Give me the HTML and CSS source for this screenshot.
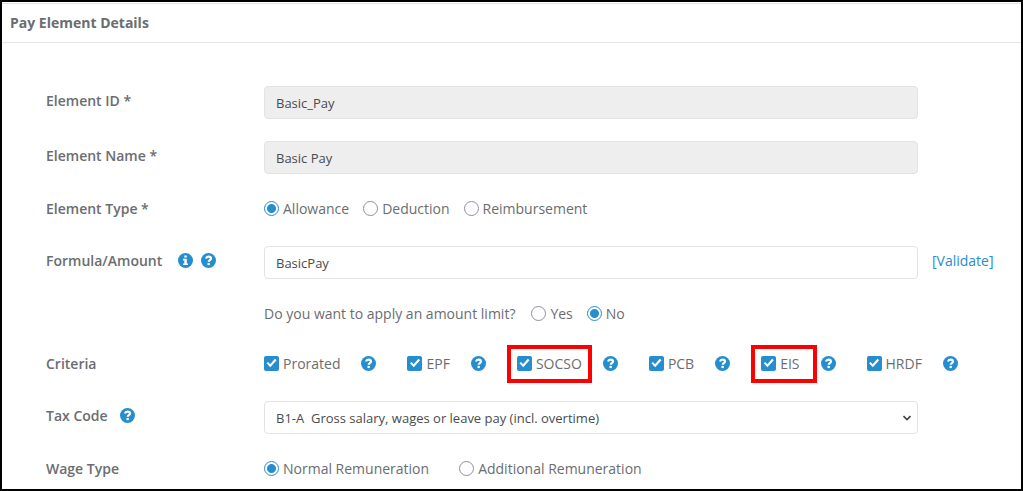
FILE: index.html
```html
<!DOCTYPE html>
<html lang="en">
<head>
<meta charset="utf-8">
<meta name="viewport" content="width=device-width, initial-scale=1">
<title>Pay Element Details</title>
<link rel="stylesheet" href="styles.css">
</head>
<body>
<svg class="sprite" aria-hidden="true">
  <symbol id="help" viewBox="0 0 15 15">
    <circle cx="7.5" cy="7.5" r="7.5" fill="#268dce"/>
    <path d="M5 5.5C5.4 4.2 6.3 3.6 7.5 3.6c1.4 0 2.5.7 2.5 1.9 0 1.6-2.3 1.6-2.3 3.3" fill="none" stroke="#fff" stroke-width="2.2"/>
    <path d="M6.5 9.9h2.3v2.2H6.5z" fill="#fff"/>
  </symbol>
  <symbol id="info" viewBox="0 0 15 15">
    <circle cx="7.5" cy="7.5" r="7.5" fill="#268dce"/>
    <path d="M6.3 2.5h2.5v2.1H6.3zM5.1 5.8h3.7v4.6h1.2V12H5.1v-1.6h1.2V7.4H5.1z" fill="#fff"/>
  </symbol>
</svg>
<main class="panel">
  <h1 class="panel-title">Pay Element Details</h1>
  <form class="form">
    <div class="row row-control">
      <label class="label" for="element-id">Element ID *</label>
      <input class="control" id="element-id" type="text" value="Basic_Pay" readonly>
    </div>
    <div class="row row-control">
      <label class="label" for="element-name">Element Name *</label>
      <input class="control" id="element-name" type="text" value="Basic Pay" readonly>
    </div>
    <div class="row row-type" role="radiogroup" aria-labelledby="type-label">
      <span class="label" id="type-label">Element Type *</span>
      <div class="options">
        <label class="option"><input class="radio" type="radio" name="type" checked>Allowance</label>
        <label class="option"><input class="radio" type="radio" name="type">Deduction</label>
        <label class="option"><input class="radio" type="radio" name="type">Reimbursement</label>
      </div>
    </div>
    <div class="row row-control">
      <div class="label label-formula">
        <label for="formula">Formula/Amount</label>
        <span class="icons"><svg class="icon"><use href="#info"/></svg><svg class="icon"><use href="#help"/></svg></span>
      </div>
      <input class="control" id="formula" type="text" value="BasicPay">
      <a class="validate" href="#">[Validate]</a>
    </div>
    <div class="row" role="radiogroup" aria-labelledby="limit-label">
      <div class="options field">
        <span class="question" id="limit-label">Do you want to apply an amount limit?</span>
        <label class="option"><input class="radio" type="radio" name="limit">Yes</label>
        <label class="option"><input class="radio" type="radio" name="limit" checked>No</label>
      </div>
    </div>
    <div class="row row-criteria" role="group" aria-labelledby="criteria-label">
      <span class="label" id="criteria-label">Criteria</span>
      <div class="criteria">
        <div class="criterion"><label class="option"><input class="check" type="checkbox" checked>Prorated</label><svg class="icon"><use href="#help"/></svg></div>
        <div class="criterion"><label class="option"><input class="check" type="checkbox" checked>EPF</label><svg class="icon"><use href="#help"/></svg></div>
        <div class="criterion"><label class="option marked"><input class="check" type="checkbox" checked>SOCSO</label><svg class="icon"><use href="#help"/></svg></div>
        <div class="criterion"><label class="option"><input class="check" type="checkbox" checked>PCB</label><svg class="icon"><use href="#help"/></svg></div>
        <div class="criterion"><label class="option marked marked-wide"><input class="check" type="checkbox" checked>EIS</label><svg class="icon"><use href="#help"/></svg></div>
        <div class="criterion"><label class="option"><input class="check" type="checkbox" checked>HRDF</label><svg class="icon"><use href="#help"/></svg></div>
      </div>
    </div>
    <div class="row row-control">
      <div class="label label-tax">
        <label for="tax-code">Tax Code</label>
        <svg class="icon"><use href="#help"/></svg>
      </div>
      <div class="select-box">
        <select class="control select" id="tax-code"><option>B1-A&nbsp; Gross salary, wages or leave pay (incl. overtime)</option></select>
        <svg class="chevron" viewBox="0 0 8 6"><path d="M0.5 1l3.5 3.5L7.5 1" fill="none" stroke="#444" stroke-width="1.6"/></svg>
      </div>
    </div>
    <div class="row" role="radiogroup" aria-labelledby="wage-label">
      <span class="label" id="wage-label">Wage Type</span>
      <div class="options options-wide">
        <label class="option"><input class="radio" type="radio" name="wage" checked>Normal Remuneration</label>
        <label class="option"><input class="radio" type="radio" name="wage">Additional Remuneration</label>
      </div>
    </div>
  </form>
</main>
</body>
</html>
```
FILE: styles.css
```css
* {
  box-sizing: border-box;
}

body {
  margin: 0;
  background: #fff;
  color: #6b6d70;
  font: 14px/20px "Open Sans", "Noto Sans", sans-serif;
}

.sprite {
  position: absolute;
  width: 0;
  height: 0;
}

.panel {
  min-height: 100vh;
  padding-top: 1px;
  border: 2px solid #000;
}

.panel-title {
  margin: 0;
  padding: 9px 8px;
  border: solid #e3e4e5;
  border-width: 1px 0;
  font-size: 14px;
  line-height: 20px;
  font-weight: 700;
}

.form {
  display: flex;
  flex-direction: column;
  gap: 22px;
  padding: 43px 0 4px 44px;
}

.row {
  display: grid;
  grid-template-columns: 218px minmax(0, 1fr) 103px;
  align-items: center;
  min-height: 26px;
}

.row-type {
  margin-bottom: 2px;
}

.row-criteria {
  min-height: 30px;
}

.label {
  display: flex;
  align-items: center;
  font-weight: 600;
}

.row-control > .label,
.row-control > .validate {
  padding-bottom: 4px;
}

.label-formula {
  gap: 16px;
}

.label-tax {
  gap: 12px;
}

.icons {
  display: flex;
  gap: 8px;
}

.icon {
  display: block;
  flex: none;
  width: 15px;
  height: 15px;
}

.control {
  width: 100%;
  height: 33px;
  margin: 0;
  padding: 0 11px;
  border: 1px solid #e2e3e4;
  border-radius: 4px;
  background: #fff;
  color: #4a4b4d;
  font: 13px/20px "Open Sans", "Noto Sans", sans-serif;
}

.control:read-only:not(select) {
  background: #eee;
}

.validate {
  padding-left: 14px;
  color: #268dce;
  text-decoration: none;
}

.field {
  grid-column: 2;
}

.options {
  display: flex;
  gap: 14px;
}

.options-wide {
  gap: 30px;
}

.question {
  padding-right: 2px;
}

.option {
  display: flex;
  align-items: center;
  gap: 4px;
  white-space: nowrap;
}

.radio,
.check {
  flex: none;
  appearance: none;
  width: 15px;
  height: 15px;
  margin: 0 0 2px;
}

.radio {
  border: 1px solid #8f8f9d;
  border-radius: 50%;
  background: #fff;
}

.radio:checked {
  border-color: #268dce;
  background: radial-gradient(circle, #268dce 4px, #fff 5px);
}

.check {
  border-radius: 2px;
  background: #268dce;
}

.check:checked::before {
  content: "";
  display: block;
  width: 15px;
  height: 15px;
  background: #fff;
  clip-path: polygon(17% 52%, 27% 43%, 41% 58%, 73% 22%, 84% 31%, 42% 79%);
}

.criteria {
  grid-column: 2 / 4;
  display: flex;
  gap: 31px;
}

.criterion {
  display: flex;
  align-items: center;
  gap: 21px;
}

.criterion > .icon {
  margin-bottom: 2px;
}

.marked {
  position: relative;
}

.marked::after {
  content: "";
  position: absolute;
  inset: -9px -10px;
  border: 4px solid #f00;
  pointer-events: none;
}

.marked-wide::after {
  right: -17px;
}

.select-box {
  position: relative;
}

.select {
  display: block;
  appearance: none;
}

.chevron {
  position: absolute;
  top: 14px;
  right: 7px;
  width: 8px;
  height: 6px;
  pointer-events: none;
}
```
